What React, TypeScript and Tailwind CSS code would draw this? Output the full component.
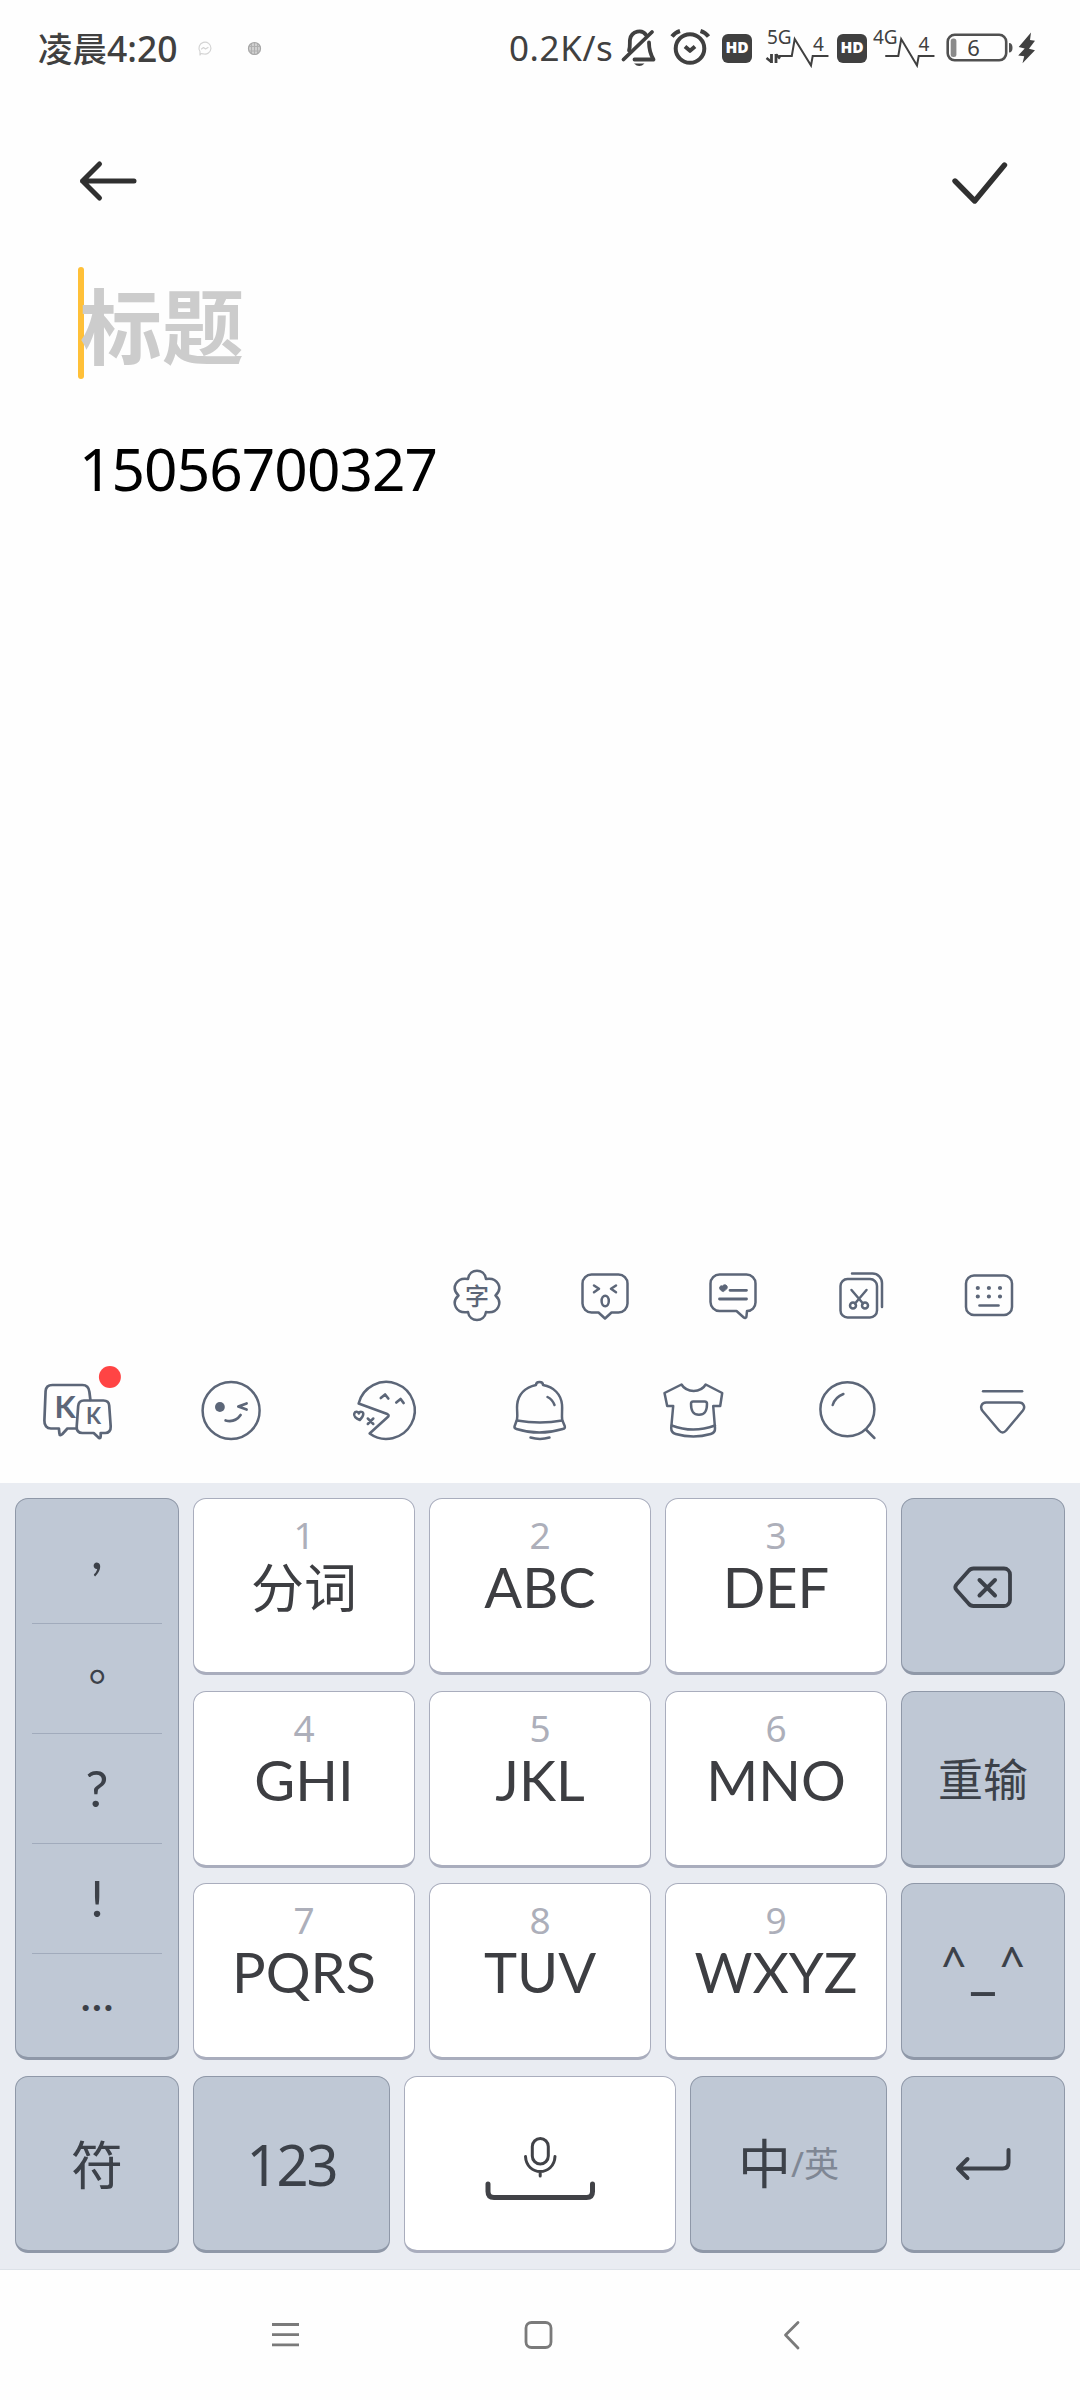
import type { ReactNode } from "react";

type IconProps = {
    box: string;
    w: number;
    h: number;
    stroke?: number;
    className?: string;
    children: ReactNode;
};

// Icons are drawn in screen units, box is the part of the screen they cover.
function Icon({ box, w, h, stroke = 2.5, className = "", children }: IconProps) {
    return (
        <svg
            viewBox={box}
            width={w}
            height={h}
            fill="none"
            stroke="currentColor"
            strokeWidth={stroke}
            strokeLinecap="round"
            strokeLinejoin="round"
            className={`shrink-0 overflow-visible ${className}`}
        >
            {children}
        </svg>
    );
}

function HdBadge() {
    return (
        <span className="flex h-[29px] w-[30px] shrink-0 items-center justify-center rounded-[6px] bg-[#404040] font-['Open_Sans'] text-[15.5px] font-extrabold leading-none text-white">
            HD
        </span>
    );
}

function StatusBar() {
    return (
        <header className="flex h-24 items-center pl-[38px] text-[#404040]">
            <span className="w-[159px] whitespace-nowrap text-[35.5px] font-medium leading-[48px]">
                <span className="text-[34.5px]">凌晨</span>4:20
            </span>

            <Icon box="197 40 16 16" w={16} h={16} stroke={1.2} className="text-[#d4d4d4]">
                <path d="M201 53.5l-1 1.5v-3.5a6 6 0 1 1 3 2.3zM201.500 49l2-1.500 2 1.500 2.500-1.500" />
            </Icon>
            <Icon box="246 40 17 17" w={17} h={17} stroke={1.2} className="ml-[33px] text-[#a4a4a4]">
                <circle cx="254.500" cy="48.500" r="6" fill="#d4d4d4" />
                <path d="M249 46.500h11M249 51h11M254.500 43v11M251.500 44.500v8M257.500 44.500v8" stroke="#b0b0b0" />
            </Icon>

            <span className="ml-[246px] w-[111px] whitespace-nowrap text-[35px] leading-[48px] tracking-[0.6px]">
                0.2K/s
            </span>

            <Icon box="620.500 28 38 42" w={38} h={42} stroke={3.8}>
                <path d="M624 60.500L652.500 33" />
                <path d="M629.500 51.500c1.500-4 .5-8 1-11 1.500-9 12.500-10.500 16-4.500" />
                <path d="M649.500 43.500c0 7 1 11 4.500 17h-19" />
                <path d="M634.500 64.500h10.500q-5.200 5-10.500 0z" fill="currentColor" stroke="none" />
            </Icon>
            <Icon box="670.500 28 42 42" w={42} h={42} stroke={4} className="ml-[12px]">
                <circle cx="690.500" cy="49.500" r="14.300" />
                <path d="M672.500 37.500q3-4 8-5.500M701 32q5 1.500 8 5.500M685.500 47.500l5 4.300 5-4.300" strokeLinecap="butt" />
            </Icon>

            <span className="ml-[10px] flex">
                <HdBadge />
            </span>

            <Icon box="764 26 68 44" w={68} h={44} stroke={2} className="ml-[11px]">
                <text x="768" y="43.800" fontSize="19" fill="currentColor" stroke="none">5G</text>
                <path d="M780.500 56h12.300l2.900-17 16.300 26.500 1.700-9.500h15" strokeLinejoin="miter" />
                <path d="M772.500 54v9M777 54v9" strokeWidth="2.800" strokeLinecap="butt" />
                <path d="M772.500 62l-5-4M777 54.500l4 4" strokeWidth="2.500" strokeLinecap="butt" />
                <text x="814" y="50.700" fontSize="19" fill="currentColor" stroke="none">4</text>
            </Icon>

            <span className="ml-[6px] flex">
                <HdBadge />
            </span>

            <Icon box="872 26 66 44" w={66} h={44} stroke={2} className="ml-[4px]">
                <text x="874" y="43.800" fontSize="19" fill="currentColor" stroke="none">4G</text>
                <path d="M887 56h12.300l2.900-17 15.800 26.500 1.700-9.500h15" strokeLinejoin="miter" />
                <text x="919.500" y="50.700" fontSize="19" fill="currentColor" stroke="none">4</text>
            </Icon>

            <Icon box="944 28 96 40" w={96} h={40} className="ml-[6px]">
                <rect x="948.700" y="34.800" width="58.500" height="25.500" rx="7" stroke="#505050" strokeWidth="2.600" />
                <rect x="951.700" y="38.500" width="5.700" height="18.500" rx="2.500" fill="#8a8a8a" stroke="none" />
                <path d="M1010 43q3.500 0 3.500 4.700t-3.500 4.700z" fill="#505050" stroke="none" />
                <text x="968.300" y="55.700" fontSize="22" fill="currentColor" stroke="none">6</text>
                <path
                    d="M1032 32.500l-12.300 14.500 6 1.500-6.500 7 6 .7-1.700 7 12.500-13-6-1.500 6-8-5-.7z"
                    fill="currentColor"
                    stroke="none"
                />
            </Icon>
        </header>
    );
}

function Note() {
    return (
        <main className="h-[1143px]">
            <div className="flex h-[171px] items-start justify-between pl-[76px] pr-[71px] pt-[60px] text-[#303030]">
                <Icon box="76 156 64 50" w={64} h={50} stroke={5}>
                    <path d="M134 181H82.500M99.500 164l-17 17 17 17" />
                </Icon>
                <Icon box="949 156 60 50" w={60} h={50} stroke={5.4}>
                    <path d="M955 181l19.700 20 29.800-36" />
                </Icon>
            </div>

            <div className="flex h-[112px] items-center pl-[78px]">
                <span className="h-[112px] w-[6px] rounded-[3px] bg-[#ffc038]" />
                <h1 className="-ml-[4px] translate-y-[2.5px] whitespace-nowrap text-[82px] font-bold leading-[112px] text-[#cccccc]">
                    标题
                </h1>
            </div>

            <p className="mt-[51px] pl-[79px] text-[58.5px] font-[450] leading-[76px] tracking-[-0.9px] text-black">
                15056700327
            </p>
        </main>
    );
}

function QuickTools() {
    return (
        <div className="flex h-[112px] items-center gap-[64px] pl-[444.5px] text-[#5c6678]">
            <Icon box="444.500 1263 64 64" w={64} h={64}>
                <path d="M467.500 1279C469 1268 484 1268 485.500 1279C497 1277 503 1288 495 1295.500C503 1303 497 1314 485.500 1312C484 1322.500 469 1322.500 467.500 1312C456 1314 450 1303 458 1295.500C450 1288 456 1277 467.500 1279Z" />
                <text x="464.500" y="1304.500" fontSize="24" fontWeight="500" fill="currentColor" stroke="none">字</text>
            </Icon>
            <Icon box="572.500 1263 64 64" w={64} h={64}>
                <path d="M591 1274.500h27a9 9 0 0 1 9 9v20a9 9 0 0 1-9 9h-7l-6.500 6-6.500-6h-7a9 9 0 0 1-9-9v-20a9 9 0 0 1 9-9z" />
                <path d="M593.500 1285.500l5 3.300-5 3.500M615.500 1285.500l-5 3.300 5 3.500" />
                <ellipse cx="604.700" cy="1301" rx="3.600" ry="5.200" />
            </Icon>
            <Icon box="700.500 1263 64 64" w={64} h={64}>
                <path d="M719 1274.500h27a9 9 0 0 1 9 9v19a8.500 8.500 0 0 1-8.500 8.500l-.5 5c0 2-1.500 2.500-3 1.200l-7-6.200h-17a9 9 0 0 1-9-9v-18.500a9 9 0 0 1 9-9z" />
                <path d="M729.500 1290.300h16.500M719 1299h27" strokeWidth="2.800" />
                <path d="M722.500 1291.500c-5-1.500-4-6.500-.5-5.500 2-2.500 6-.5 4.500 2.500z" fill="currentColor" strokeWidth="1" />
            </Icon>
            <Icon box="828.500 1263 64 64" w={64} h={64}>
                <rect x="840" y="1279" width="36.500" height="38.500" rx="7" />
                <path d="M851.500 1273.500h20.500a9.500 9.500 0 0 1 9.500 9.500v24" />
                <path d="M851 1290l11.500 13.500M866 1290l-11.500 13.500" />
                <circle cx="852.500" cy="1305.500" r="3" />
                <circle cx="864.500" cy="1305.500" r="3" />
            </Icon>
            <Icon box="956.500 1263 64 64" w={64} h={64}>
                <rect x="965.500" y="1275.500" width="46" height="39.500" rx="8" />
                <path d="M977.300 1288h.01M988.400 1288h.01M999.500 1288h.01M977.300 1296.500h.01M988.400 1296.500h.01M999.500 1296.500h.01" strokeWidth="4.200" />
                <path d="M979 1305.500h19" strokeWidth="2.600" />
            </Icon>
        </div>
    );
}

function Toolbar() {
    return (
        <div className="grid h-[132px] grid-cols-7 justify-items-center pt-[9px] text-[#5c6678]">
            <Icon box="27.100 1360 100 100" w={100} h={100} stroke={2.7}>
                <path d="M90.500 1400l-1-8c-.5-4.500-3-7-7-7H52.500c-4 0-6.500 2-6.800 6L44.500 1420.500c-.3 5 2.500 8 6.500 8h8l.5 5c0 2 1.500 2 3 .5l5-5.500h9" />
                <path d="M84 1400.500h19.500c3.500 0 5.500 1.700 5.800 5l1.500 21c.2 4-2 6.500-5.500 6.500h-4.500v3.500c0 2-1.500 2-2.500.8l-4.500-4.300H82.500c-4 0-6-2.500-5.700-6.500l1.500-20.500c.3-3.500 2.200-5.500 5.700-5.500z" />
                <text x="54.500" y="1417.500" fontSize="31" fontWeight="700" fill="currentColor" stroke="none" className="font-['Lato']">K</text>
                <text x="86" y="1424" fontSize="22" fontWeight="700" fill="currentColor" stroke="none" className="font-['Lato']">K</text>
                <circle cx="110" cy="1377" r="11" fill="#ff4444" stroke="none" />
            </Icon>
            <Icon box="181.400 1360 100 100" w={100} h={100}>
                <circle cx="231.500" cy="1410.500" r="28.500" />
                <circle cx="220.300" cy="1407" r="4.900" fill="currentColor" stroke="none" />
                <path d="M247 1403.500l-8.300 3 8.300 3M226 1420.500c6 1.500 11.500-.5 15-5.500" strokeWidth="2.700" />
            </Icon>
            <Icon box="335.700 1360 100 100" w={100} h={100}>
                <path d="M358.300 1403.500A28.500 28.500 0 1 1 369.300 1433.500L388 1416.500q1-1.500-1-2.500z" />
                <path d="M380.500 1398l4.300-3.500 3.200 4M396 1402.500l4.300-3.500 3 4" strokeWidth="2.700" />
                <path d="M359.500 1420c-4-1.500-6.500-4-5.500-6.500s4-2 4.500 0c1-2.500 4.500-2 4.500.5s-1.500 4-3.500 6z" strokeWidth="2.500" />
                <path d="M367.500 1418.500l5.500 5.500M373 1418.500l-5.500 5.500" strokeWidth="2.500" />
            </Icon>
            <Icon box="490 1360 100 100" w={100} h={100}>
                <path d="M517 1419.500c1-5-.5-9.500.2-15 1-10 8-17 18.800-19.500 0-4 7-4 7 0 11 2 18 9.500 19 19.500.5 5-.5 10.500.2 15.500l2.500 6c.6 1.800 0 2.500-2 3-15 4.500-32 4.500-46.200 0-1.500-.5-2.300-1-2-2.500z" />
                <path d="M517 1420.500c15 2.700 31 2.700 45.200 0M530.500 1437.500c6 1.800 13 1.800 19 0M547.500 1397q5 2.500 7 8" />
            </Icon>
            <Icon box="644.300 1360 100 100" w={100} h={100}>
                <path d="M681.800 1384.500l-17 8.500 2.700 13h6l-2 22c0 3.500 1 5 4.500 6 12 3.300 23.500 3.300 35 0 3.500-1 4.500-3 4.300-6l-1.800-22h7l2-13-16.500-8.500c-5 8.500-19 8.500-24.200 0z" />
                <path d="M672 1425.500c14 5.300 29 5.300 43.300 0M693.500 1401.500h11.500q2.300 0 2.300 2.300c0 7-1.800 11-8 11s-8-4-8-11q0-2.300 2.200-2.300z" />
            </Icon>
            <Icon box="798.600 1360 100 100" w={100} h={100}>
                <circle cx="847" cy="1409.300" r="27" />
                <path d="M865.500 1429.500l8.500 8.500M832.300 1405q2.500-8 10.700-11" />
            </Icon>
            <Icon box="952.900 1360 100 100" w={100} h={100}>
                <path d="M983 1391.300h39" strokeWidth="2.600" />
                <path d="M986 1402.500h33c4.500 0 6.500 4.500 3.800 8L1006 1430.500q-3.500 4-7 0L982.500 1411c-3-3.700-1-8.500 3.500-8.500z" />
            </Icon>
        </div>
    );
}

const light = "rounded-[13px] border border-b-[3px] border-[#a9adbd] bg-white";
const dark = "rounded-[13px] border border-b-[3px] border-[#8f98a8] bg-[#bfc8d5] text-[#3c4149]";

function LetterKey({ digit, label }: { digit: string; label: string }) {
    const cjk = label === "分词";
    return (
        <div className={`${light} flex flex-col items-center pt-[16px]`}>
            <span className="text-[37px] leading-[40px] text-[#adafba]">{digit}</span>
            <span
                className={`mt-[2px] whitespace-nowrap font-['Lato','Noto_Sans_CJK_SC',sans-serif] leading-[60px] text-[#3d3e42] ${cjk ? "translate-y-[1px] text-[53px]" : "text-[56px]"}`}
            >
                {label}
            </span>
        </div>
    );
}

const letters = [
    ["1", "分词"],
    ["2", "ABC"],
    ["3", "DEF"],
    ["4", "GHI"],
    ["5", "JKL"],
    ["6", "MNO"],
    ["7", "PQRS"],
    ["8", "TUV"],
    ["9", "WXYZ"],
];

const marks = [
    { text: ",", style: "text-[54px] -translate-y-[20px]" },
    { text: "。", style: "text-[45px] translate-x-[14px] -translate-y-[15px]" },
    { text: "?", style: "text-[51px] -translate-y-[1px]" },
    { text: "!", style: "text-[51px] -translate-y-[1px]" },
    { text: "...", style: "text-[48px] -translate-y-[16px]" },
];

function Keyboard() {
    return (
        <section className="h-[787px] border-b border-[#dde2e8] bg-[#e9ecf2] px-[15px] pt-[15px]">
            <div className="grid h-[562px] grid-cols-[164px_694px_164px] gap-x-[14px]">
                <div className={`${dark} overflow-hidden px-[16px] pt-[15px]`}>
                    {marks.map((mark, i) => (
                        <div
                            key={mark.text}
                            className={`flex h-[110px] items-center justify-center font-['Lato','Noto_Sans_CJK_SC',sans-serif] ${i < 4 ? "border-b border-[#a1abbc]" : ""}`}
                        >
                            <span className={`leading-[60px] ${mark.style}`}>{mark.text}</span>
                        </div>
                    ))}
                </div>

                <div className="grid grid-cols-3 grid-rows-[177px_177px_177px] content-between gap-x-[14px]">
                    {letters.map(([digit, label]) => (
                        <LetterKey key={digit} digit={digit} label={label} />
                    ))}
                </div>

                <div className="grid grid-rows-[177px_177px_177px] content-between">
                    <div className={`${dark} flex items-center justify-center`}>
                        <Icon box="950 1560.500 66 50" w={66} h={50} stroke={3.8}>
                            <path d="M973.500 1568h30.500a6 6 0 0 1 6 6v25.500a6 6 0 0 1-6 6h-30.500q-3 0-5-2.500l-12-13.500q-2.500-2.700 0-5.500l12-13.500q2-2.500 5-2.500z" />
                            <path d="M979.500 1579.500l15.500 15.500M995 1579.500l-15.500 15.500" strokeWidth="4" />
                        </Icon>
                    </div>
                    <div className={`${dark} flex items-center justify-center text-[45px]`}>
                        <span className="translate-y-[2px] leading-[60px]">重输</span>
                    </div>
                    <div className={`${dark} flex items-start justify-center pt-[49px] leading-[60px]`}>
                        <span className="text-[43px] font-medium">^</span>
                        <span className="mx-[5px] translate-y-[2px] text-[58px] font-bold">_</span>
                        <span className="text-[43px] font-medium">^</span>
                    </div>
                </div>
            </div>

            <div className="mt-[16px] flex h-[177px] gap-[14px]">
                <div className={`${dark} flex w-[164px] items-center justify-center text-[52px]`}>
                    <span className="translate-y-px leading-[60px]">符</span>
                </div>
                <div className={`${dark} flex w-[197px] items-center justify-center text-[56px]`}>
                    <span className="leading-[60px] tracking-[-2px]">123</span>
                </div>
                <div className={`${light} flex w-[272px] items-center justify-center text-[#414247]`}>
                    <Icon box="480 2125.500 120 76" w={120} h={76} stroke={3}>
                        <rect x="532.300" y="2138" width="16" height="25.500" rx="8" />
                        <path d="M525.500 2156c1 20 28.500 20 29.500 0M540.200 2171v4.500" />
                        <path d="M488 2183.500v7.500q0 6 6 6h92.500q6 0 6-6v-7.500" strokeWidth="5" />
                    </Icon>
                </div>
                <div className={`${dark} flex w-[197px] items-center justify-center leading-[60px]`}>
                    <span className="text-[53px]">中</span>
                    <span className="text-[35px] text-[#7f8794]">/英</span>
                </div>
                <div className={`${dark} flex w-[164px] items-center justify-center`}>
                    <Icon box="950 2138.500 66 50" w={66} h={50} stroke={4}>
                        <path d="M1008.500 2149.500v12.500q0 6-6 6H958M967.500 2158.500l-9.500 9.500 9.500 9.500" />
                    </Icon>
                </div>
            </div>
        </section>
    );
}

function NavBar() {
    return (
        <nav className="flex h-[130px] items-center justify-between pl-[265px] pr-[268px] text-[#7a7a7a]">
            <Icon box="265 2315 40 40" w={40} h={40} stroke={2.8}>
                <path d="M272 2324.500h27M272 2334.700h27M272 2344.800h27" strokeLinecap="butt" />
            </Icon>
            <Icon box="518.500 2315 40 40" w={40} h={40} stroke={2.8}>
                <rect x="525.500" y="2322.500" width="25" height="25" rx="5.500" />
            </Icon>
            <Icon box="772 2315 40 40" w={40} h={40} stroke={2.8}>
                <path d="M798 2322.500L785.500 2335l12.500 13" />
            </Icon>
        </nav>
    );
}

export default function App() {
    return (
        <div className="flex h-[2400px] w-[1080px] flex-col overflow-hidden bg-[#fefefe] font-['Noto_Sans','Noto_Sans_CJK_SC',sans-serif]">
            <StatusBar />
            <Note />
            <QuickTools />
            <Toolbar />
            <Keyboard />
            <NavBar />
        </div>
    );
}
